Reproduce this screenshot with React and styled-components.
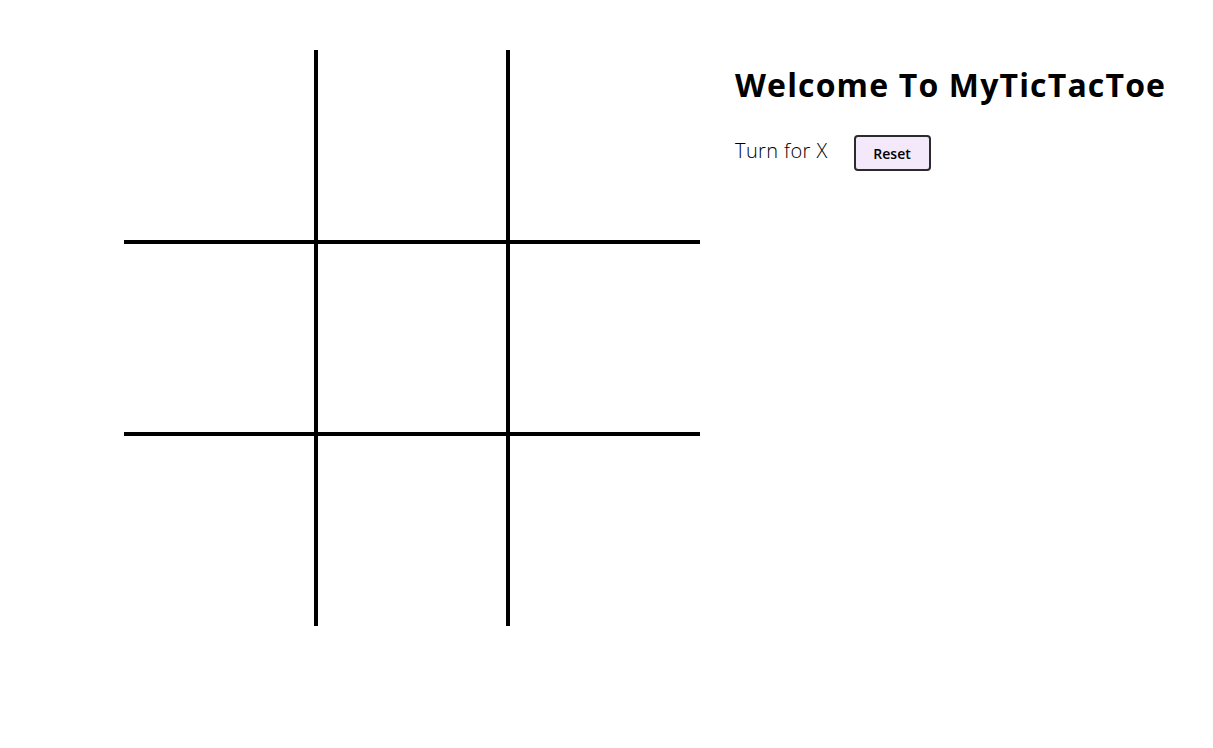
import React, { useState } from "react";
import styled, { createGlobalStyle } from "styled-components";

const Global = createGlobalStyle`
  html, body { margin: 0; padding: 0; background: #ffffff; }
  body { font-family: "Open Sans", "Noto Sans", sans-serif; color: #000; }
`;

const Page = styled.main`
  display: flex;
  align-items: flex-start;
  gap: 35px;
  padding: 50px 0 0 124px;
`;

const Board = styled.div`
  display: grid;
  grid-template-columns: repeat(3, 192px);
  grid-template-rows: repeat(3, 192px);
`;

const Cell = styled.button`
  box-sizing: border-box;
  width: 192px;
  height: 192px;
  padding: 0;
  background: #fff;
  border: 0 solid #000;
  border-left-width: ${(p) => (p.$col > 0 ? "2px" : "0")};
  border-right-width: ${(p) => (p.$col < 2 ? "2px" : "0")};
  border-top-width: ${(p) => (p.$row > 0 ? "2px" : "0")};
  border-bottom-width: ${(p) => (p.$row < 2 ? "2px" : "0")};
  font-family: "Open Sans", sans-serif;
  font-size: 96px;
  font-weight: 600;
  cursor: pointer;
`;

const Panel = styled.section`
  display: flex;
  flex-direction: column;
  padding-top: 15px;
`;

const Title = styled.h1`
  margin: 0;
  font-family: "Open Sans", sans-serif;
  font-size: 32px;
  font-weight: 700;
  line-height: 40px;
  letter-spacing: 1.15px;
`;

const Status = styled.div`
  display: flex;
  align-items: center;
  gap: 26px;
  margin-top: 26px;
`;

const Turn = styled.span`
  font-family: "Open Sans", sans-serif;
  font-size: 20px;
  font-weight: 300;
  line-height: 28px;
  letter-spacing: 0.4px;
`;

const ResetButton = styled.button`
  box-sizing: border-box;
  width: 77px;
  height: 36px;
  margin-top: 4px;
  background: #f3e9fb;
  border: 2px solid #2b2b2b;
  border-radius: 4px;
  font-family: "Open Sans", sans-serif;
  font-size: 14px;
  font-weight: 600;
  color: #000;
  cursor: pointer;
`;

export default function App() {
  const [cells, setCells] = useState(Array(9).fill(""));
  const [turn, setTurn] = useState("X");

  const play = (i) => {
    if (cells[i]) return;
    const next = cells.slice();
    next[i] = turn;
    setCells(next);
    setTurn(turn === "X" ? "O" : "X");
  };

  return (
    <>
      <Global />
      <Page>
        <Board>
          {cells.map((v, i) => (
            <Cell key={i} $row={Math.floor(i / 3)} $col={i % 3} onClick={() => play(i)}>
              {v}
            </Cell>
          ))}
        </Board>
        <Panel>
          <Title>Welcome To MyTicTacToe</Title>
          <Status>
            <Turn>Turn for {turn}</Turn>
            <ResetButton
              onClick={() => {
                setCells(Array(9).fill(""));
                setTurn("X");
              }}
            >
              Reset
            </ResetButton>
          </Status>
        </Panel>
      </Page>
    </>
  );
}
